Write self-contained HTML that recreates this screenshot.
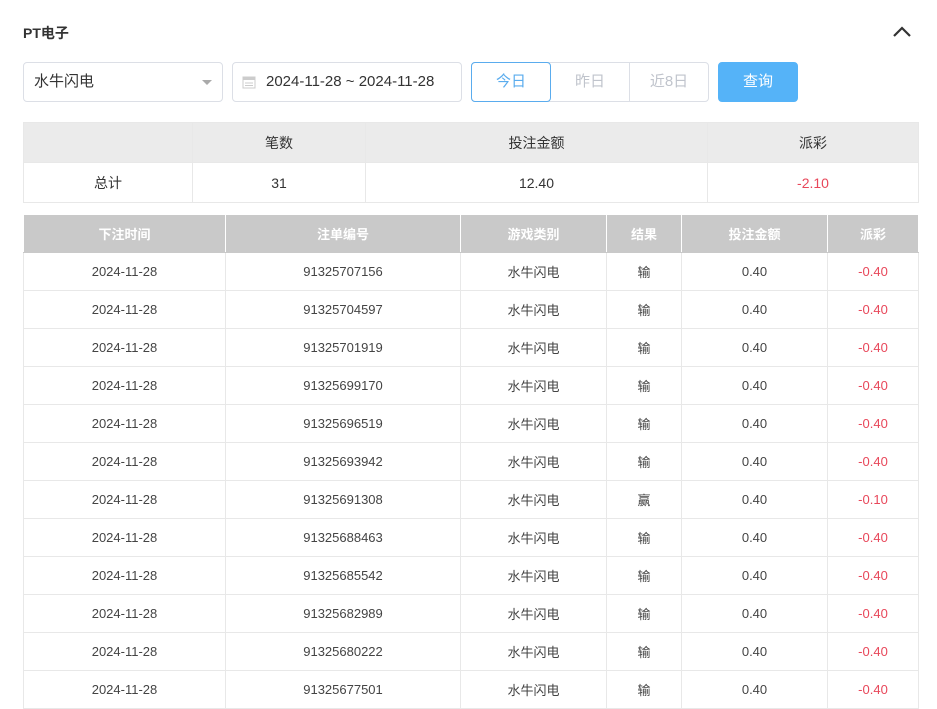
<!DOCTYPE html><html><head><meta charset="utf-8"><style>
body{margin:0;width:937px;height:685px;overflow:hidden;background:#fff;font-family:"Liberation Sans","Noto Sans CJK SC",sans-serif;color:#333;}
.t{position:absolute;left:23px;top:23px;font-size:14px;font-weight:bold;color:#333}
.sel,.date,.seg,.btn{position:absolute;top:62px;height:40px;box-sizing:border-box;border:1px solid #dcdfe6;border-radius:4px;font-size:15px;line-height:38px}
table{position:absolute;left:23px;border-collapse:collapse;table-layout:fixed;text-align:center}
td{border:1px solid #e8e8e8;padding:0}
.s td{height:39px;font-size:14px}
.s tr:first-child td{background:#ebebeb}
.m td{height:37px;font-size:13px;color:#444}
.m tr:first-child td{background:#c9c9c9;color:#fff;font-weight:bold;border-color:#fff #fff #c9c9c9;}
td.r,.m td.r{color:#e8475a}
</style></head><body>
<div class="t">PT电子</div>
<svg style="position:absolute;left:892px;top:25px" width="20" height="14"><path d="M2 11L10 3L18 11" stroke="#333" stroke-width="2.2" fill="none"/></svg>
<div class="sel" style="left:23px;width:200px;padding-left:10px;color:#333">水牛闪电<span style="position:absolute;right:10px;top:17px;border:5px solid transparent;border-top:5px solid #aaa;"></span></div>
<div class="date" style="left:232px;width:230px;padding-left:33px;color:#333"><svg style="position:absolute;left:9px;top:12px" width="14" height="14"><rect x="1" y="2" width="12" height="11" fill="none" stroke="#ccc"/><rect x="1" y="2" width="12" height="3" fill="#ccc"/><path d="M3 8h8M3 10.5h8" stroke="#ccc"/></svg>2024-11-28 ~ 2024-11-28</div>
<div class="seg" style="left:471px;width:238px;"></div>
<div class="seg" style="left:471px;width:80px;border-color:#5aacee;color:#5aacee;text-align:center">今日</div>
<div style="position:absolute;left:551px;top:63px;width:78px;height:38px;line-height:38px;text-align:center;color:#c0c4cc;font-size:15px;border-right:1px solid #dcdfe6">昨日</div>
<div style="position:absolute;left:630px;top:63px;width:78px;height:38px;line-height:38px;text-align:center;color:#c0c4cc;font-size:15px">近8日</div>
<div class="btn" style="left:718px;width:80px;background:#55b3f8;border-color:#55b3f8;color:#fff;text-align:center">查询</div>
<table class="s" style="top:122px;width:895px"><colgroup><col width="169"><col width="173"><col width="342"><col width="211"></colgroup>
<tr><td></td><td>笔数</td><td>投注金额</td><td>派彩</td></tr>
<tr><td>总计</td><td>31</td><td>12.40</td><td class="r">-2.10</td></tr></table>
<table class="m" style="top:214px;width:895px"><colgroup><col width="202"><col width="235"><col width="146"><col width="75"><col width="146"><col width="91"></colgroup>
<tr><td>下注时间</td><td>注单编号</td><td>游戏类别</td><td>结果</td><td>投注金额</td><td>派彩</td></tr>
<tr><td>2024-11-28</td><td>91325707156</td><td>水牛闪电</td><td>输</td><td>0.40</td><td class="r">-0.40</td></tr>
<tr><td>2024-11-28</td><td>91325704597</td><td>水牛闪电</td><td>输</td><td>0.40</td><td class="r">-0.40</td></tr>
<tr><td>2024-11-28</td><td>91325701919</td><td>水牛闪电</td><td>输</td><td>0.40</td><td class="r">-0.40</td></tr>
<tr><td>2024-11-28</td><td>91325699170</td><td>水牛闪电</td><td>输</td><td>0.40</td><td class="r">-0.40</td></tr>
<tr><td>2024-11-28</td><td>91325696519</td><td>水牛闪电</td><td>输</td><td>0.40</td><td class="r">-0.40</td></tr>
<tr><td>2024-11-28</td><td>91325693942</td><td>水牛闪电</td><td>输</td><td>0.40</td><td class="r">-0.40</td></tr>
<tr><td>2024-11-28</td><td>91325691308</td><td>水牛闪电</td><td>赢</td><td>0.40</td><td class="r">-0.10</td></tr>
<tr><td>2024-11-28</td><td>91325688463</td><td>水牛闪电</td><td>输</td><td>0.40</td><td class="r">-0.40</td></tr>
<tr><td>2024-11-28</td><td>91325685542</td><td>水牛闪电</td><td>输</td><td>0.40</td><td class="r">-0.40</td></tr>
<tr><td>2024-11-28</td><td>91325682989</td><td>水牛闪电</td><td>输</td><td>0.40</td><td class="r">-0.40</td></tr>
<tr><td>2024-11-28</td><td>91325680222</td><td>水牛闪电</td><td>输</td><td>0.40</td><td class="r">-0.40</td></tr>
<tr><td>2024-11-28</td><td>91325677501</td><td>水牛闪电</td><td>输</td><td>0.40</td><td class="r">-0.40</td></tr>
</table>
</body></html>
